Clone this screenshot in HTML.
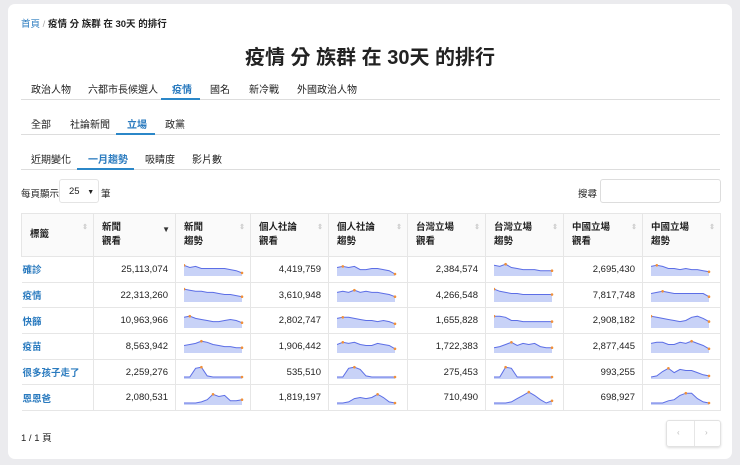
<!DOCTYPE html>
<html><head><meta charset="utf-8"><style>
*{box-sizing:border-box;margin:0;padding:0}
body{width:740px;height:465px;background:#ebebee;font-family:"Liberation Sans","Noto Sans CJK TC",sans-serif;font-size:10px;color:#222;position:relative;overflow:hidden}
.card{position:absolute;left:8px;top:4px;width:724px;height:455px;background:#fff;border-radius:7px}
.a{position:absolute;white-space:nowrap}
.tabs{position:absolute;left:21px;width:699px;border-bottom:1px solid #ddd;height:1px}
.ul{position:absolute;height:2px;background:#2b87c8}
.blue{color:#2b7bbf}
table{position:absolute;left:21px;top:213px;border-collapse:collapse;width:699px;table-layout:fixed}
td,th{border:1px solid #e6e6e6;font-size:9.5px}
th{height:43px;text-align:left;font-weight:bold;vertical-align:middle;padding-left:8px;line-height:14px;background:#fafafa;position:relative}
th .s{position:absolute;right:5px;top:7px;color:#ccc;font-size:7px}
td{height:25.7px;text-align:right;padding-right:7px}
td.l{text-align:left;padding-left:1px;color:#2b7bbf;font-weight:bold;border-left:none}
td.g{padding:0 0 0 8px;text-align:left}
</style></head><body>
<div class="card"></div>
<div class="a" style="left:21px;top:16px;font-size:9.5px"><span class="blue">首頁</span> <span style="color:#aaa">/</span> <b>疫情 分 族群 在 30天 的排行</b></div>
<div class="a" style="left:0;width:740px;text-align:center;top:41px;font-size:20px;font-weight:bold">疫情 分 族群 在 30天 的排行</div>

<div class="a" style="top:81px;left:31px;font-size:10px">政治人物</div>
<div class="a" style="top:81px;left:88px;font-size:10px">六都市長候選人</div>
<div class="a blue" style="top:81px;left:172px;font-size:10px;font-weight:bold">疫情</div>
<div class="a" style="top:81px;left:210px;font-size:10px">國名</div>
<div class="a" style="top:81px;left:249px;font-size:10px">新冷戰</div>
<div class="a" style="top:81px;left:297px;font-size:10px">外國政治人物</div>
<div class="tabs" style="top:99px"></div><div class="ul" style="left:161px;top:98px;width:39px"></div>

<div class="a" style="top:116px;left:31px;font-size:10px">全部</div>
<div class="a" style="top:116px;left:70px;font-size:10px">社論新聞</div>
<div class="a blue" style="top:116px;left:127px;font-size:10px;font-weight:bold">立場</div>
<div class="a" style="top:116px;left:165px;font-size:10px">政黨</div>
<div class="tabs" style="top:134px"></div><div class="ul" style="left:116px;top:133px;width:39px"></div>

<div class="a" style="top:151px;left:31px;font-size:10px">近期變化</div>
<div class="a blue" style="top:151px;left:88px;font-size:10px;font-weight:bold">一月趨勢</div>
<div class="a" style="top:151px;left:145px;font-size:10px">吸睛度</div>
<div class="a" style="top:151px;left:192px;font-size:10px">影片數</div>
<div class="tabs" style="top:169px"></div><div class="ul" style="left:77px;top:168px;width:57px"></div>

<div class="a" style="top:186px;left:21px;font-size:9.5px">每頁顯示</div>
<div class="a" style="top:179px;left:59px;width:40px;height:24px;border:1px solid #e4e4e4;border-radius:3px;font-size:9.5px;padding:6px 0 0 9px">25 <span style="font-size:7px;margin-left:5px">▼</span></div>
<div class="a" style="top:186px;left:101px;font-size:9.5px">筆</div>
<div class="a" style="top:186px;left:578px;font-size:9.5px">搜尋</div>
<div class="a" style="top:179px;left:600px;width:121px;height:24px;border:1px solid #ddd;border-radius:3px"></div>

<table>
<colgroup><col style="width:72px"><col style="width:82px"><col style="width:75px"><col style="width:78px"><col style="width:79px"><col style="width:78px"><col style="width:78px"><col style="width:79px"><col style="width:78px"></colgroup>
<tr><th>標籤<span class="s">⇕</span></th><th>新聞<br>觀看<span class="s" style="color:#333;font-size:8px;top:9px">▼</span></th><th>新聞<br>趨勢<span class="s">⇕</span></th><th>個人社論<br>觀看<span class="s">⇕</span></th><th>個人社論<br>趨勢<span class="s">⇕</span></th><th>台灣立場<br>觀看<span class="s">⇕</span></th><th>台灣立場<br>趨勢<span class="s">⇕</span></th><th>中國立場<br>觀看<span class="s">⇕</span></th><th>中國立場<br>趨勢<span class="s">⇕</span></th></tr>
<tbody id="tb"></tbody>
</table>

<div class="a" style="top:430px;left:21px;font-size:9.5px">1 / 1 頁</div>
<div class="a" style="top:420px;left:666px;width:55px;height:27px;border:1px solid #e2e2e2;border-radius:3px;box-shadow:0 1px 2px #ddd"><div style="position:absolute;left:27px;top:0;width:1px;height:25px;background:#e6e6e6"></div><span style="position:absolute;left:10px;top:7px;color:#bbb;font-size:8px">‹</span><span style="position:absolute;left:38px;top:7px;color:#bbb;font-size:8px">›</span></div>

<script>
var rows=[["確診","25,113,074","4,419,759","2,384,574","2,695,430",
[3,5,4,6,6,6,6,6,7,8,10],[5,4,5,4,7,7,6,6,7,8,11],[3,4,2,5,6,7,7,7,8,8,8],[4,3,4,6,6,7,6,7,7,8,9]],
["疫情","22,313,260","3,610,948","4,266,548","7,817,748",
[1,2,3,3,4,4,5,6,6,7,8],[4,3,4,2,4,3,4,4,5,6,8],[1,3,4,5,5,6,6,6,6,6,6],[5,4,3,4,5,5,5,5,5,5,8]],
["快篩","10,963,966","2,802,747","1,655,828","2,908,182",
[3,2,4,5,6,7,7,6,5,6,8],[4,3,3,4,5,6,6,7,6,7,9],[2,2,3,6,6,7,7,7,7,7,7],[2,3,4,5,6,7,6,3,2,4,7]],
["疫苗","8,563,942","1,906,442","1,722,383","2,877,445",
[6,5,4,2,3,5,6,7,7,8,8],[5,3,4,3,5,6,6,4,5,6,9],[8,7,5,3,6,4,5,4,7,8,8],[4,3,3,5,5,3,4,2,4,6,9]],
["很多孩子走了","2,259,276","535,510","275,453","993,255",
[11,11,3,2,10,11,11,11,11,11,11],[11,11,3,2,4,10,11,11,11,11,11],[11,11,2,3,11,11,11,11,11,11,11],[11,10,6,3,7,4,5,5,7,9,10]],
["恩恩爸","2,080,531","1,819,197","710,490","698,927",
[11,11,11,10,8,3,5,4,9,9,8],[11,11,10,7,6,7,6,3,6,10,11],[11,11,11,10,7,4,1,4,8,11,9],[11,11,11,9,8,4,2,2,7,10,11]]];
function sp(d){var w=58,h=14,pts=d.map(function(v,i){return [(i*w/(d.length-1)).toFixed(1),(1+v*(h-2)/11).toFixed(1)]});
var mi=0;d.forEach(function(v,i){if(v<d[mi])mi=i});
var line=pts.map(function(p){return p.join(',')}).join(' ');
return '<svg width="60" height="16" style="display:block"><polygon points="0,15 '+line+' '+w+',15" fill="#c8d2f7"/><polyline points="'+line+'" fill="none" stroke="#5c6ee6" stroke-width="1"/><circle cx="'+pts[mi][0]+'" cy="'+pts[mi][1]+'" r="1.3" fill="#f0903a"/><circle cx="'+w+'" cy="'+pts[d.length-1][1]+'" r="1.3" fill="#f0903a"/></svg>'}
var h='';rows.forEach(function(r){h+='<tr><td class="l">'+r[0]+'</td><td>'+r[1]+'</td><td class="g">'+sp(r[5])+'</td><td>'+r[2]+'</td><td class="g">'+sp(r[6])+'</td><td>'+r[3]+'</td><td class="g">'+sp(r[7])+'</td><td>'+r[4]+'</td><td class="g">'+sp(r[8])+'</td></tr>'});
document.getElementById('tb').innerHTML=h;
</script>
</body></html>
